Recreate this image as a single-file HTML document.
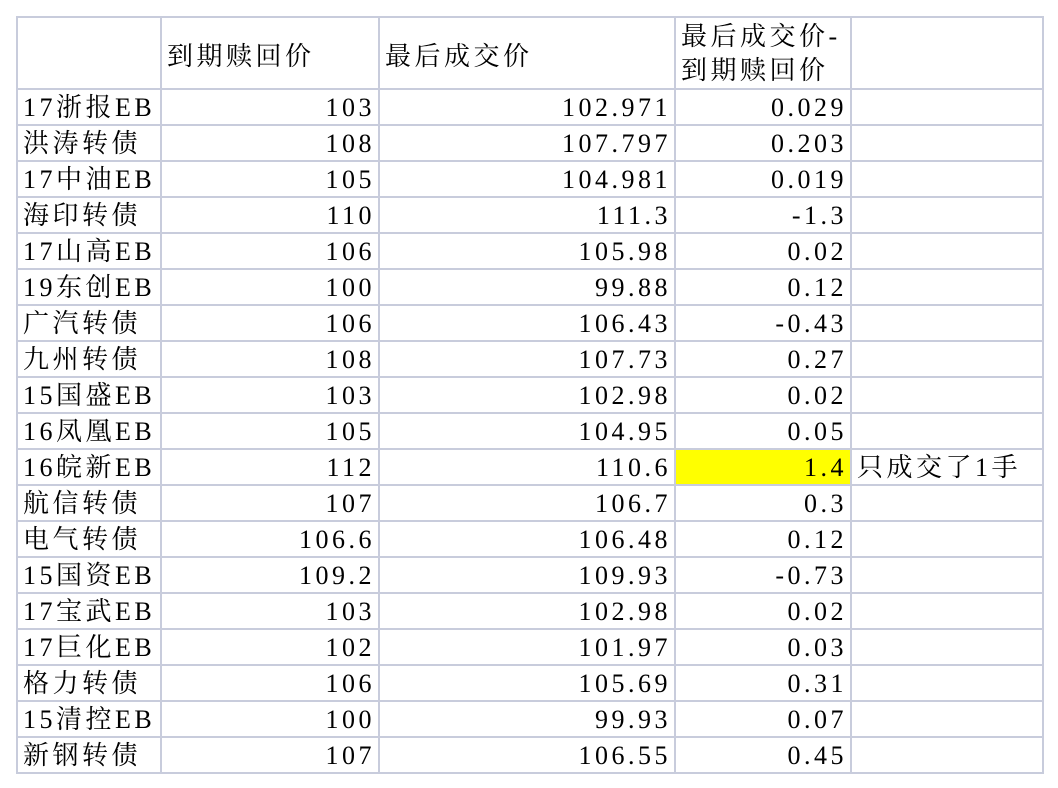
<!DOCTYPE html>
<html><head><meta charset="utf-8"><style>
body{margin:0;background:#fff;width:1058px;height:788px;overflow:hidden}
table{position:absolute;left:16px;top:16px;border-collapse:collapse;table-layout:fixed;font-family:"Liberation Serif","Noto Serif CJK SC",serif;font-size:26px;letter-spacing:3.5px;color:#000}
td{border:2px solid #c8ccdc;height:32px;padding:2px 3px 0 5px;line-height:32px;white-space:nowrap;overflow:hidden;vertical-align:middle}
tr.h td{height:62px;line-height:34px;vertical-align:middle;padding-top:8px}
tr.h td.b{vertical-align:bottom;padding-top:0;height:70px}
td.r{text-align:right}
.y{background:#ffff00}
</style></head><body>
<table>
<colgroup><col style="width:144px"><col style="width:218px"><col style="width:296px"><col style="width:176px"><col style="width:192px"></colgroup>
<tr class="h"><td></td><td>到期赎回价</td><td>最后成交价</td><td class="b">最后成交价-<br>到期赎回价</td><td></td></tr>
<tr><td>17浙报EB</td><td class="r">103</td><td class="r">102.971</td><td class="r">0.029</td><td></td></tr>
<tr><td>洪涛转债</td><td class="r">108</td><td class="r">107.797</td><td class="r">0.203</td><td></td></tr>
<tr><td>17中油EB</td><td class="r">105</td><td class="r">104.981</td><td class="r">0.019</td><td></td></tr>
<tr><td>海印转债</td><td class="r">110</td><td class="r">111.3</td><td class="r">-1.3</td><td></td></tr>
<tr><td>17山高EB</td><td class="r">106</td><td class="r">105.98</td><td class="r">0.02</td><td></td></tr>
<tr><td>19东创EB</td><td class="r">100</td><td class="r">99.88</td><td class="r">0.12</td><td></td></tr>
<tr><td>广汽转债</td><td class="r">106</td><td class="r">106.43</td><td class="r">-0.43</td><td></td></tr>
<tr><td>九州转债</td><td class="r">108</td><td class="r">107.73</td><td class="r">0.27</td><td></td></tr>
<tr><td>15国盛EB</td><td class="r">103</td><td class="r">102.98</td><td class="r">0.02</td><td></td></tr>
<tr><td>16凤凰EB</td><td class="r">105</td><td class="r">104.95</td><td class="r">0.05</td><td></td></tr>
<tr><td>16皖新EB</td><td class="r">112</td><td class="r">110.6</td><td class="r y">1.4</td><td>只成交了1手</td></tr>
<tr><td>航信转债</td><td class="r">107</td><td class="r">106.7</td><td class="r">0.3</td><td></td></tr>
<tr><td>电气转债</td><td class="r">106.6</td><td class="r">106.48</td><td class="r">0.12</td><td></td></tr>
<tr><td>15国资EB</td><td class="r">109.2</td><td class="r">109.93</td><td class="r">-0.73</td><td></td></tr>
<tr><td>17宝武EB</td><td class="r">103</td><td class="r">102.98</td><td class="r">0.02</td><td></td></tr>
<tr><td>17巨化EB</td><td class="r">102</td><td class="r">101.97</td><td class="r">0.03</td><td></td></tr>
<tr><td>格力转债</td><td class="r">106</td><td class="r">105.69</td><td class="r">0.31</td><td></td></tr>
<tr><td>15清控EB</td><td class="r">100</td><td class="r">99.93</td><td class="r">0.07</td><td></td></tr>
<tr><td>新钢转债</td><td class="r">107</td><td class="r">106.55</td><td class="r">0.45</td><td></td></tr>
</table>
</body></html>
